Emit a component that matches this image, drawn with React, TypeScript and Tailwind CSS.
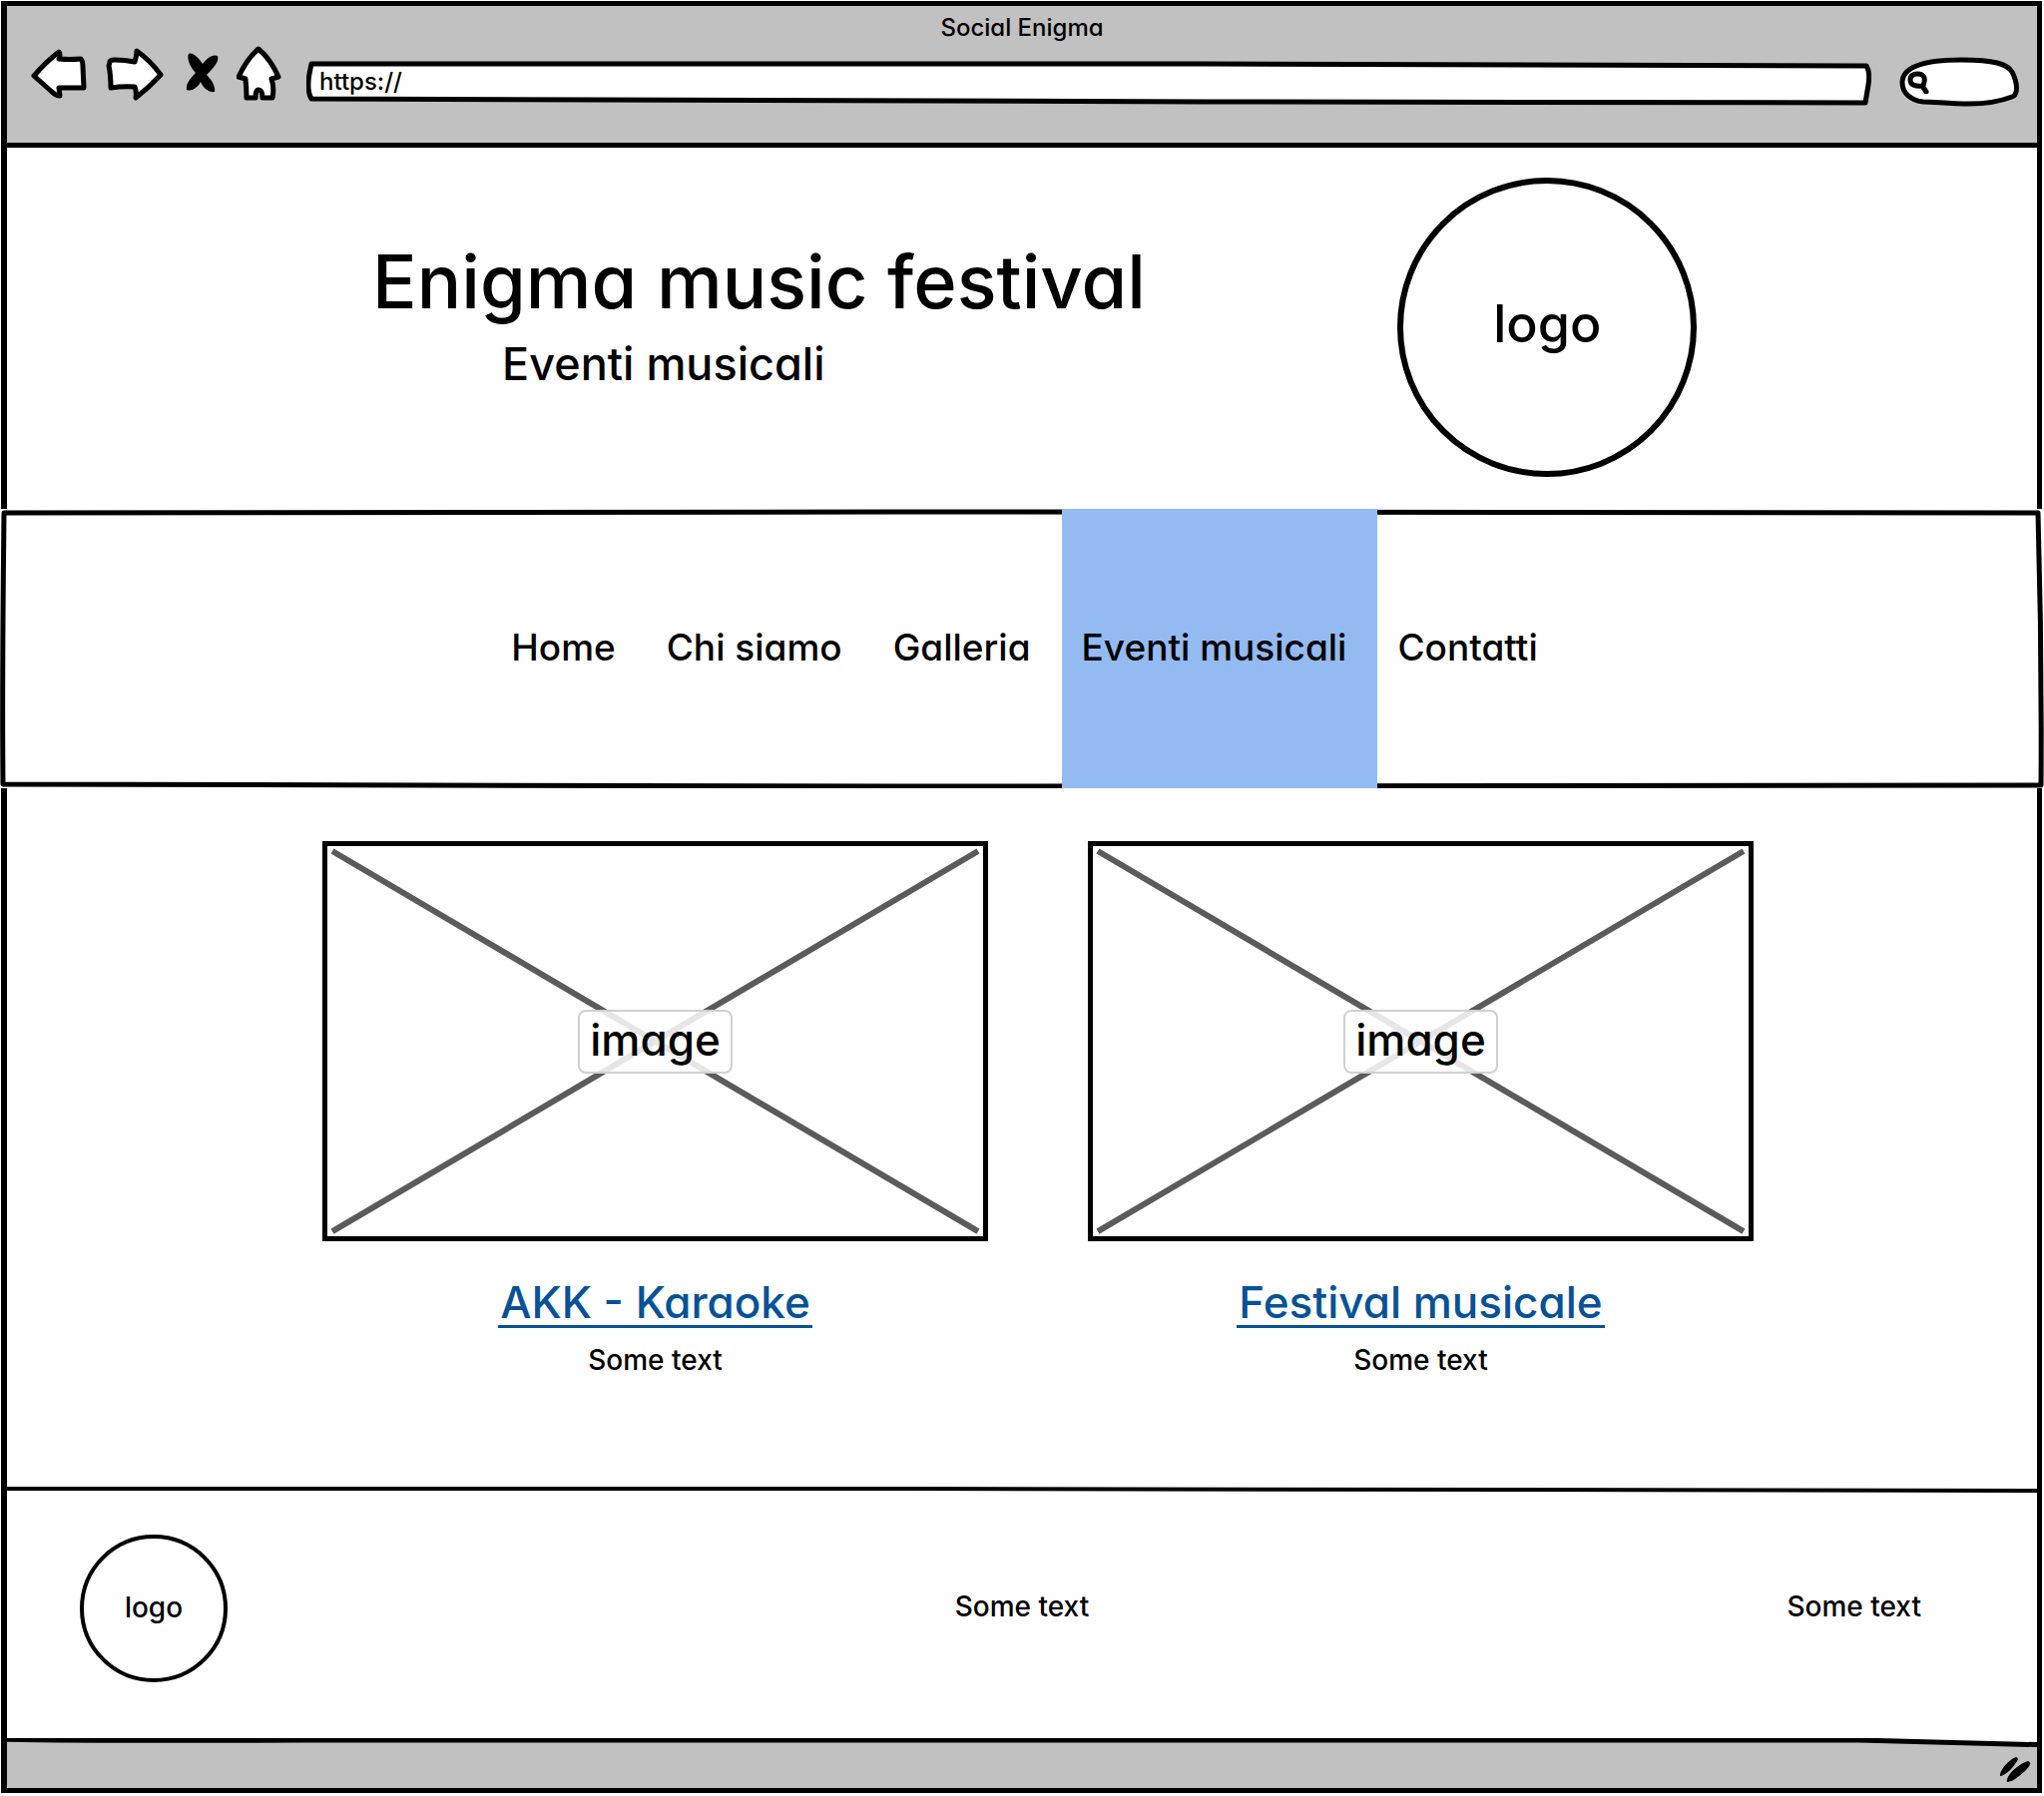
import React from 'react';

const sketch = {
  fill: 'white',
  stroke: 'black',
  strokeWidth: 5,
  strokeLinejoin: 'round' as const,
  strokeLinecap: 'round' as const,
};

function BackIcon() {
  return (
    <svg className="h-[54px] w-14" viewBox="31 46 56 54" aria-hidden="true">
      <path {...sketch} d="M34 75 Q46 61 59 51 Q61 53 59 58 Q70 59 81 58 Q83 60 83 66 L84 87 Q72 87 59 87 L60 95 Q56 95 52 91 Z" />
    </svg>
  );
}

function ForwardIcon() {
  return (
    <svg className="h-[54px] w-[60px]" viewBox="104 47 60 54" aria-hidden="true">
      <path {...sketch} d="M109 62 Q109 60 114 60 Q124 60 134 62 Q136 56 136 51 Q150 61 160 75 Q148 88 135 98 Q136 92 134 87 Q123 86 110 88 Q110 75 108 66 Z" />
    </svg>
  );
}

function StopIcon() {
  return (
    <svg className="h-[42px] w-9" viewBox="184 51 36 42" aria-hidden="true">
      <path d="M190 52 C194 50 200 56 204 62 C209 55 215 52 219 54 C221 60 214 67 208 73 C213 78 217 84 216 90 C211 91 205 87 202 80 C199 86 193 90 188 88 C187 83 191 77 197 71 C191 65 188 56 190 52 Z" />
    </svg>
  );
}

function HomeIcon() {
  return (
    <svg className="h-14 w-12" viewBox="238 46 48 56" aria-hidden="true">
      <path {...sketch} d="M260 49 Q272 59 280 77 L273 79 Q276 88 274 98 L264 98 Q264 90 260 90 Q257 90 257 98 L248 98 Q248 88 247 79 L240 77 Q249 58 260 49 Z" />
    </svg>
  );
}

function SearchIcon() {
  return (
    <svg className="h-6 w-6 shrink-0" viewBox="1911 72 24 24" aria-hidden="true">
      <path d="M1921 76 C1927 76 1929 79 1928 84 L1927 88 C1919 89 1914 87 1914 82 C1914 78 1917 76 1921 76 Z M1926 88 L1930 94" fill="none" stroke="black" strokeWidth="5" strokeLinecap="round" />
    </svg>
  );
}

function ResizeGrip() {
  return (
    <svg className="h-[26px] w-8" viewBox="2004 1761 32 26" aria-hidden="true">
      <path d="M2005 1781 C2004 1776 2014 1764 2021 1762 C2024 1763 2023 1765 2020 1769 C2016 1775 2009 1781 2005 1781 Z M2012 1787 C2010 1782 2022 1769 2033 1766 C2037 1768 2035 1770 2031 1775 C2025 1781 2017 1787 2012 1787 Z" />
    </svg>
  );
}

/* Hand-drawn outline that stretches with the box it decorates. */
function Outline({ box, d, width = 5, fill = 'white' }: { box: string; d: string; width?: number; fill?: string }) {
  return (
    <svg className="pointer-events-none absolute inset-0 h-full w-full" viewBox={box} preserveAspectRatio="none" aria-hidden="true">
      <path d={d} fill={fill} stroke="black" strokeWidth={width} strokeLinejoin="round" vectorEffect="non-scaling-stroke" />
    </svg>
  );
}

const toolbar = [
  { label: 'Back', icon: <BackIcon /> },
  { label: 'Forward', icon: <ForwardIcon /> },
  { label: 'Stop', icon: <StopIcon /> },
  { label: 'Home page', icon: <HomeIcon /> },
];

const links = ['Home', 'Chi siamo', 'Galleria', 'Eventi musicali', 'Contatti'];
const events = ['AKK - Karaoke', 'Festival musicale'];

function EventCard({ title }: { title: string }) {
  return (
    <article className="flex flex-col items-center">
      <div className="relative flex aspect-[665/400] w-full items-center justify-center border-[5px] border-black">
        <svg className="absolute inset-0 h-full w-full" viewBox="0 0 655 392" preserveAspectRatio="none" aria-hidden="true">
          <path d="M5 5 L650 387 M650 5 L5 387" stroke="#5b5b5b" strokeWidth="6" />
        </svg>
        <span className="relative rounded-lg border-2 border-[#d0d0d0] bg-white/85 px-[10px] pb-1 text-[44px] leading-[56px]">image</span>
      </div>
      <a href="#" className="mt-[38px] border-b-[3px] border-[#075296] px-0.5 text-[44px] leading-[46px] text-[#075296]">{title}</a>
      <p className="mt-3 text-[28px] leading-10">Some text</p>
    </article>
  );
}

export default function App() {
  return (
    <div className="flex min-h-screen flex-col bg-white pt-px pb-[3px] font-['Inter',sans-serif] font-medium text-black [font-feature-settings:'cv11']">
      <header className="mr-0.5 ml-px border-t-[5px] border-r-[5px] border-b-[5px] border-l-[6px] border-black bg-[#c1c1c1]">
        <p className="pt-1 text-center text-2xl leading-9">Social Enigma</p>
        <div className="flex h-[97px] items-start pr-[18px] pl-6">
          <div className="flex items-center gap-[18px]">
            {toolbar.map((t) => (
              <button key={t.label} type="button" aria-label={t.label}>{t.icon}</button>
            ))}
          </div>
          <div className="relative mt-[14px] ml-[22px] h-[46px] flex-1">
            <Outline box="0 0 1566 46" d="M5 4 Q400 3 900 4 L1561 6 Q1565 12 1563 25 L1560 43 L900 42 L5 39 Q0 30 3 14 Z" />
            <input aria-label="Address" defaultValue="https://" className="relative h-[42px] w-full bg-transparent pl-[13px] text-2xl outline-none" />
          </div>
          <label className="relative mt-[11px] ml-7 flex h-[50px] w-[120px] items-center pl-2">
            <Outline box="0 0 120 50" d="M3 26 C3 8 30 3 62 3 C95 3 108 7 113 15 C119 27 119 38 113 40 C100 45 85 47 70 47 C50 47 35 45 24 45 C12 44 3 36 3 26 Z" />
            <span className="relative"><SearchIcon /></span>
            <input aria-label="Search" className="relative w-16 bg-transparent text-2xl outline-none" />
          </label>
        </div>
      </header>

      <section className="mr-0.5 ml-px flex h-[362px] items-start border-r-[5px] border-l-[6px] border-black pt-[30px]">
        <div className="w-[68.5%] pt-14 pl-[18%]">
          <h1 className="text-[74px] leading-[96px] whitespace-nowrap">Enigma music festival</h1>
          <p className="mt-1 pl-[130px] text-[45px] leading-[62px]">Eventi musicali</p>
        </div>
        <div className="flex h-[300px] w-[300px] shrink-0 items-center justify-center rounded-full border-[6px] border-black pb-1.5 text-[52px]">logo</div>
      </section>

      <nav className="relative flex h-[280px] justify-center">
        <Outline box="0 0 2048 280" d="M4 4 L900 3 L2042 4 Q2046 140 2045 277 L900 278 L3 276 Q2 180 4 4 Z" />
        <ul className="relative ml-4 flex text-[37px]">
          {links.map((l) => (
            <li key={l}>
              <a href="#" aria-current={l === 'Eventi musicali' ? 'page' : undefined} className="flex h-full items-center pr-[31px] pb-0.5 pl-5 whitespace-nowrap aria-[current=page]:bg-[#94baf2]">{l}</a>
            </li>
          ))}
        </ul>
      </nav>

      <main className="mr-0.5 ml-px flex flex-1 justify-center border-r-[5px] border-l-[6px] border-black pt-[53px]">
        <div className="ml-8 grid w-[70.5%] grid-cols-2 items-start gap-x-[100px]">
          {events.map((e) => <EventCard key={e} title={e} />)}
        </div>
      </main>

      <footer className="mr-0.5 ml-px border-r-[5px] border-b-[5px] border-l-[6px] border-black">
        <div className="relative grid h-[252px] grid-cols-3 items-center px-[73px] text-[28px]">
          <Outline box="0 0 2034 252" d="M0 2 L900 2 L2034 4" width={4} fill="none" />
          <div className="mb-2 flex h-[148px] w-[148px] items-center justify-center rounded-full border-4 border-black pb-0.5">logo</div>
          <p className="mb-3 text-center">Some text</p>
          <p className="mb-3 pr-[43px] text-right">Some text</p>
        </div>
        <div className="relative flex h-[50px] items-center justify-end pr-1.5">
          <Outline box="0 0 2034 50" d="M-9 1 Q80 3 300 2 L1855 2 L2050 7 V70 H-9 Z" fill="#c1c1c1" />
          <button type="button" aria-label="Resize window" className="relative mt-3"><ResizeGrip /></button>
        </div>
      </footer>
    </div>
  );
}
